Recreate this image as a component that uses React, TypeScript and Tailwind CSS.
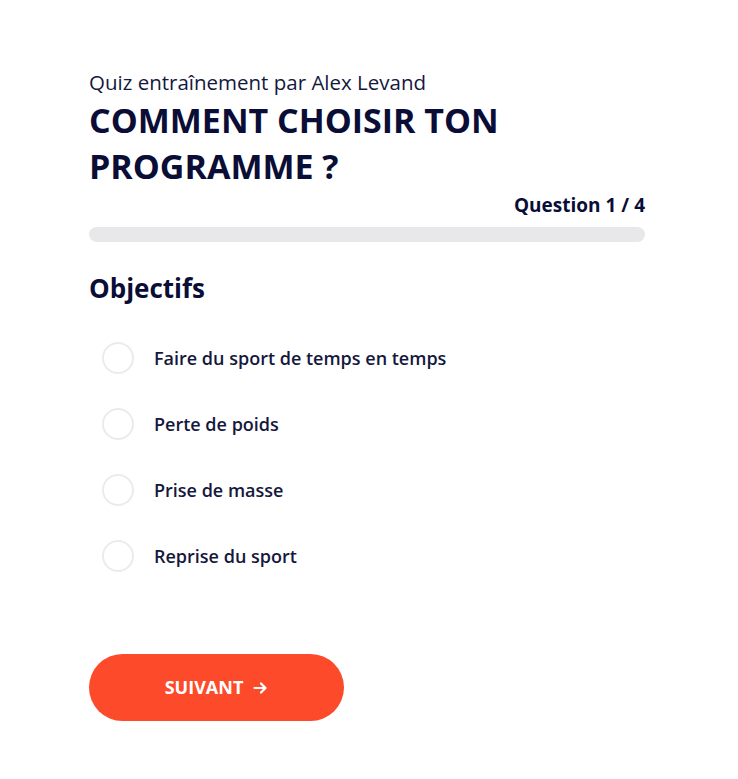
import React, { useState } from 'react';

const options = [
  'Faire du sport de temps en temps',
  'Perte de poids',
  'Prise de masse',
  'Reprise du sport',
];

const App: React.FC = () => {
  const [selected, setSelected] = useState<number | null>(null);
  const current = 1;
  const total = 4;

  return (
    <div
      className="min-h-[779px] w-full bg-white text-[#0a0d36]"
      style={{ fontFamily: '"Open Sans", "Noto Sans", sans-serif' }}
    >
      <div className="w-[556px] ml-[89px] pt-[68px]">
        <p className="text-[20.5px] leading-[28px] font-normal text-[#15183d]">
          Quiz entraînement par Alex Levand
        </p>
        <h1 className="text-[34px] leading-[46px] font-bold mt-[1px]">
          COMMENT CHOISIR TON
          <br />
          PROGRAMME ?
        </h1>

        <div className="flex justify-end mt-[4px]">
          <span className="text-[19px] leading-[24px] font-bold">
            Question {current} / {total}
          </span>
        </div>
        <div className="mt-[10px] h-[15px] w-full rounded-full bg-[#e8e7ea]" />

        <h2 className="text-[26px] leading-[34px] font-bold mt-[29px]">Objectifs</h2>

        <div className="mt-[37px] flex flex-col gap-[34px]">
          {options.map((opt, i) => (
            <button
              key={opt}
              onClick={() => setSelected(i)}
              className="flex items-center h-[32px] pl-[13px] text-left"
            >
              <span
                className={
                  'w-[32px] h-[32px] rounded-full border-2 shrink-0 ' +
                  (selected === i ? 'border-[#fc4a2a] bg-[#fc4a2a]' : 'border-[#ebebeb] bg-white')
                }
              />
              <span className="ml-[20px] text-[18px] font-semibold text-[#15183d]">{opt}</span>
            </button>
          ))}
        </div>

        <button className="mt-[82px] w-[255px] h-[67px] rounded-full bg-[#fc4a2a] text-white text-[18px] font-bold flex items-center justify-center gap-[9px]">
          SUIVANT
          <svg width="16" height="16" viewBox="0 0 16 16" fill="none" stroke="currentColor" strokeWidth="2.2" strokeLinecap="round" strokeLinejoin="round">
            <path d="M2.5 8h11M9 3.5 13.5 8 9 12.5" />
          </svg>
        </button>
      </div>
    </div>
  );
};

export default App;
